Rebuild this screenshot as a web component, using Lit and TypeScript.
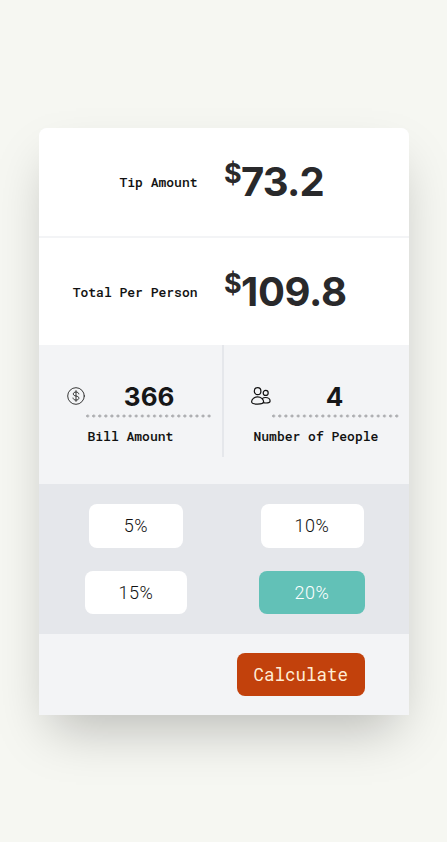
import { LitElement, html, css } from "lit";
import { customElement, state } from "lit/decorators.js";
import { classMap } from "lit/directives/class-map.js";

@customElement("app-root")
export class AppRoot extends LitElement {
  @state() private tip = 20;

  static styles = css`
    :host { display: block; height: 842px; box-sizing: border-box; padding: 128px 38.5px 0 39px; overflow: hidden; background: #f6f7f2; color: #262729; font-family: Inter, "Liberation Sans", sans-serif; }
    .card { height: 587px; border-radius: 8px 8px 0 0; background: #f3f4f6; box-shadow: 0 25px 50px -12px rgba(0, 0, 0, 0.25); display: flex; flex-direction: column; }
    .mono { font-family: "Roboto Mono", "Liberation Mono", monospace; font-size: 13px; font-weight: 500; line-height: 20px; color: #111; white-space: pre; -webkit-text-stroke: 0.08px #111; }
    .result { box-sizing: border-box; background: #fff; display: grid; grid-template-columns: 158.5px 1fr; column-gap: 26.5px; align-items: center; }
    .result .mono { text-align: right; }
    .tip { height: 110px; border-bottom: 2px solid #f3f4f6; border-radius: 8px 8px 0 0; }
    .tip .mono { margin-top: -1px; }
    .total { height: 107px; }
    .total .mono { margin-top: 1px; }
    .money { display: flex; align-items: flex-start; height: 48px; font-weight: 650; color: #29292b; }
    .money span { font-size: 27px; line-height: 32px; width: 17px; }
    .money b { font-size: 40px; line-height: 48px; font-weight: 650; letter-spacing: -0.3px; }
    .tip b { letter-spacing: -0.8px; }
    .fields { height: 139px; display: grid; grid-template-columns: 183px 1fr; }
    .field { box-sizing: border-box; height: 112px; padding: 38px 0 0 28px; }
    .field + .field { border-left: 2px solid #e5e7eb; padding-left: 26px; }
    .entry { display: flex; height: 34px; }
    .entry svg { width: 18px; height: 18px; margin-top: 4px; flex: none; }
    .people svg { width: 22px; height: 20px; margin-top: 3px; }
    .value { box-sizing: border-box; width: 125.5px; height: 35px; margin-left: 1.4px; padding-right: 0; background: radial-gradient(circle at 1.6px 2px, #adaeb1 1.15px, transparent 1.85px) left bottom / 6.08px 4px repeat-x; text-align: center; font-size: 26px; line-height: 28px; font-weight: 700; color: #161617; }
    .people .value { width: 127px; margin-left: 0; background-size: 6.16px 4px; padding-right: 2px; }
    .field .mono { margin: 9px 0 0 20.5px; }
    .people .mono { margin-left: 3.5px; }
    .tips { box-sizing: border-box; height: 150px; padding: 20px 10px 20px 11px; background: #e5e7eb; display: grid; grid-template-columns: 172px 180px; grid-template-rows: 44px 44px; row-gap: 22.5px; justify-items: center; }
    button { box-sizing: border-box; border: 0; border-radius: 8px; height: 43.5px; padding: 0; background: #fff; color: #111; font: 300 18px/44px Roboto, sans-serif; letter-spacing: 0.5px; }
    .p5 { width: 94px; }
    .p10 { width: 103px; }
    .p15 { width: 102px; }
    .p20 { width: 105.5px; }
    .selected { background: #62c1b7; color: #fff; }
    .actions { height: 81px; display: flex; justify-content: flex-end; padding: 19px 43.5px 0 0; box-sizing: border-box; }
    .calculate { width: 128.5px; height: 43px; background: #c2410c; color: #ffedd5; font: 400 17.5px/44px "Roboto Mono", "Liberation Mono", monospace; letter-spacing: 0; }
  `;

  render() {
    return html`
      <main class="card">
        <section class="result tip"><span class="mono">Tip Amount</span><div class="money"><span>$</span><b>73.2</b></div></section>
        <section class="result total"><span class="mono">Total Per Person</span><div class="money"><span>$</span><b>109.8</b></div></section>
        <section class="fields">
          <div class="field">
            <div class="entry">
              <svg viewBox="0 0 18 18" fill="none" stroke="#222" stroke-width="0.9" stroke-linecap="round">
                <circle cx="9" cy="9" r="8.3" />
                <path d="M9 3.6v10.8M11.8 6.9C11.6 5.6 10.5 5 9 5S6.3 5.7 6.3 7c0 1.3 1.2 1.7 2.7 2s2.9.7 2.9 2.1c0 1.2-1.2 2-2.9 2s-2.8-.8-3-2.1" />
              </svg>
              <div class="value">366</div>
            </div>
            <div class="mono">Bill Amount</div>
          </div>
          <div class="field people">
            <div class="entry">
              <svg viewBox="0 0 22 20" fill="none" stroke="#111" stroke-width="1.2" stroke-linejoin="round" stroke-linecap="round">
                <ellipse cx="7.6" cy="5.2" rx="3.3" ry="3.5" />
                <circle cx="15.7" cy="6.9" r="2.5" />
                <path d="M7.6 10.9c-3.3 0-6 2.4-6 4.9 0 1.5 2.2 2.3 6 2.3s6-.8 6-2.3c0-2.5-2.7-4.9-6-4.9z" />
                <path d="M12.2 12.6c.8-.7 2-1.1 3.4-1.1 2.5 0 4.5 1.7 4.5 3.5 0 1.3-1.6 2-4.2 2-.9 0-1.8-.1-2.6-.3" />
              </svg>
              <div class="value">4</div>
            </div>
            <div class="mono">Number of People</div>
          </div>
        </section>
        <section class="tips">
          ${[5, 10, 15, 20].map(
            (p) => html`<button class=${classMap({ ["p" + p]: true, selected: this.tip === p })} @click=${() => (this.tip = p)}>${p}%</button>`
          )}
        </section>
        <section class="actions"><button class="calculate">Calculate</button></section>
      </main>
    `;
  }
}
